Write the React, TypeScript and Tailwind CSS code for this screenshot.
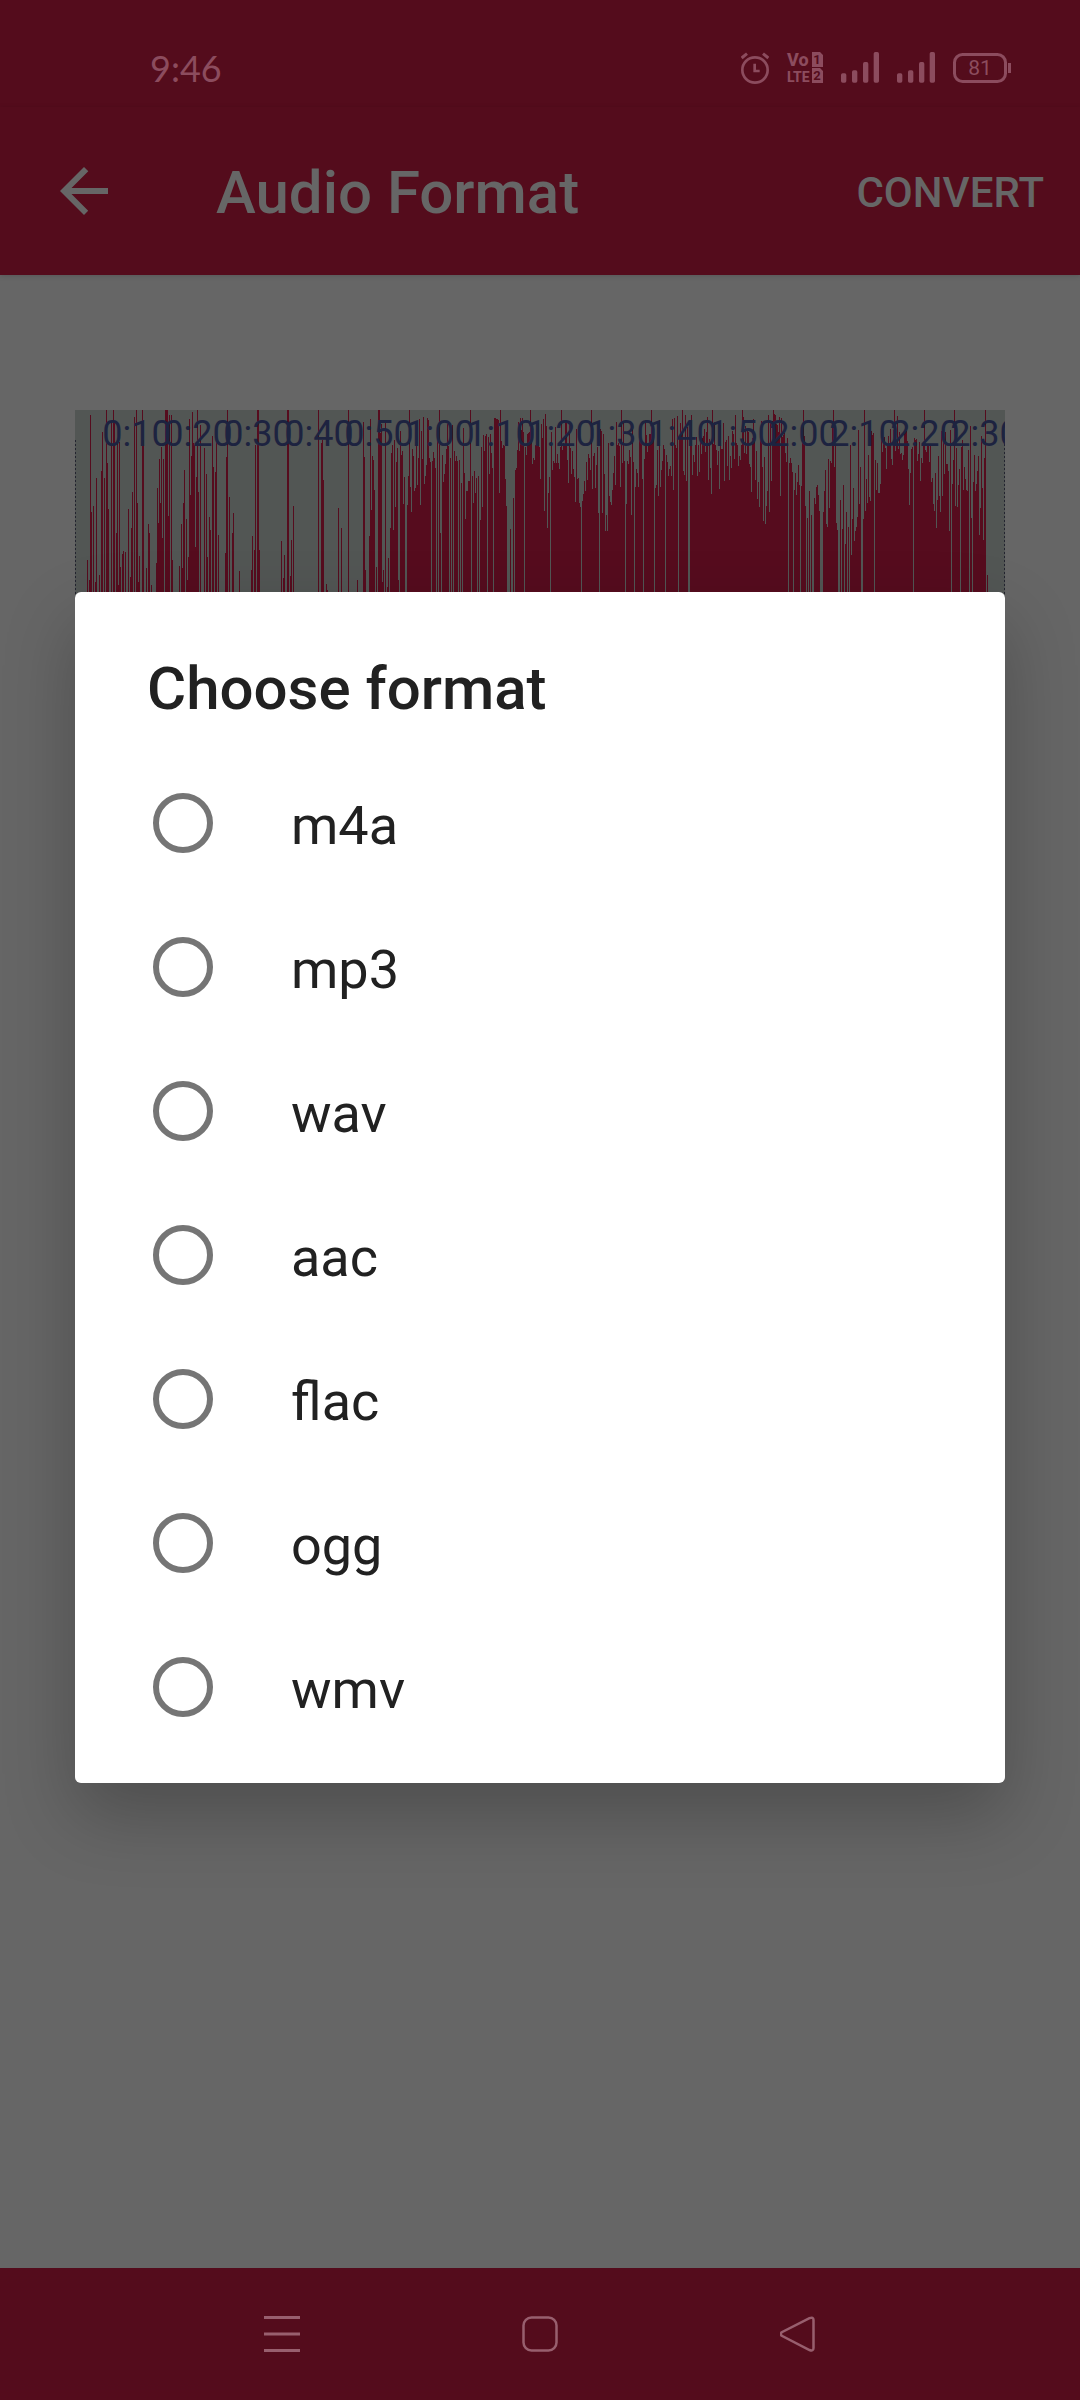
import { useState } from "react";

type Point = [number, number];

const FORMATS = ["m4a", "mp3", "wav", "aac", "flac", "ogg", "wmv"];

const WAVE_HEIGHT = 364;

// Quiet opening of the track: [column, top of the bar]
const INTRO: Point[] = [
  [12, 150], [14, 170], [15, 5], [16, 102], [18, 96], [20, 172], [21, 68], [24, 165], [26, 61], [27, 22],
  [29, 68], [31, 0], [32, 53], [33, 99], [36, 11], [38, 0], [39, 13], [41, 123], [42, 33], [43, 175],
  [44, 32], [45, 157], [47, 144], [48, 141], [50, 142], [53, 99], [55, 167], [56, 118], [57, 82], [59, 7],
  [61, 0], [62, 93], [63, 172], [64, 146], [67, 0], [68, 30], [71, 158], [73, 114], [74, 123], [76, 175],
  [81, 153], [82, 78], [83, 113], [84, 49], [85, 93], [86, 37], [87, 128], [88, 49], [90, 0], [91, 0],
  [92, 143], [93, 106], [94, 5], [96, 5], [97, 150], [104, 156], [106, 114], [107, 158], [108, 93], [109, 60],
  [111, 109], [112, 170], [113, 147], [114, 9], [115, 85], [116, 46], [117, 2], [118, 33], [119, 35], [120, 137],
  [121, 67], [122, 0], [123, 82], [125, 15], [129, 38], [131, 64], [132, 147], [134, 107], [135, 120], [137, 26],
  [138, 57], [140, 62], [141, 32], [143, 125], [150, 143], [151, 47], [152, 0], [154, 87], [157, 123], [158, 103],
  [164, 161], [176, 160], [177, 126], [179, 140], [180, 35], [182, 0], [183, 73], [184, 140], [206, 131], [208, 168],
  [209, 145], [212, 0], [215, 166], [216, 130], [218, 96], [243, 0], [246, 33], [247, 30], [248, 70], [251, 174],
  [252, 180], [263, 98], [266, 118], [273, 0], [282, 170], [288, 12], [289, 47], [290, 160], [294, 126], [295, 9],
  [296, 100], [297, 46], [298, 50], [299, 80], [301, 157], [303, 0], [304, 35], [305, 23], [306, 14], [307, 172],
  [308, 160], [310, 10], [312, 177], [313, 148], [315, 118], [316, 43], [317, 35], [318, 120], [319, 30], [320, 97],
  [321, 52], [322, 38], [323, 170],
];

// Loud part of the track: the bars' tops lie between these two outlines
const PEAKS: Point[] = [
  [324, 70], [326, 36], [335, 36], [351, 12], [355, 40], [371, 35], [388, 44], [402, 60], [408, 24], [420, 20],
  [430, 38], [432, 150], [440, 60], [444, 20], [460, 20], [465, 40], [470, 10], [472, 70], [477, 50], [485, 32],
  [492, 30], [502, 50], [505, 96], [510, 46], [522, 36], [528, 60], [536, 95], [540, 30], [552, 35], [562, 60],
  [564, 26], [582, 23], [592, 28], [605, 12], [625, 14], [637, 22], [642, 43], [650, 30], [657, 20], [665, 0],
  [675, 22], [688, 28], [695, 6], [713, 28], [718, 70], [722, 30], [727, 60], [735, 84], [742, 75], [747, 122],
  [750, 60], [758, 30], [761, 112], [768, 70], [773, 112], [778, 50], [785, 50], [790, 24], [805, 15], [825, 14],
  [845, 32], [858, 32], [868, 58], [878, 45], [884, 24], [892, 40], [902, 40], [907, 70], [909, 120],
];
const DIPS: Point[] = [
  [324, 150], [340, 130], [350, 140], [368, 150], [380, 110], [390, 130], [408, 130], [430, 120], [434, 170], [442, 70],
  [462, 80], [473, 160], [480, 80], [492, 80], [505, 150], [512, 90], [525, 155], [537, 165], [545, 130], [560, 140],
  [575, 120], [590, 100], [610, 110], [625, 75], [645, 125], [658, 80], [680, 120], [688, 150], [705, 108], [725, 110],
  [742, 150], [758, 130], [775, 170], [785, 140], [802, 110], [818, 80], [835, 120], [855, 140], [872, 150], [888, 120],
  [909, 160],
];

// Columns without any sound
const SILENT = new Set([
  324, 330, 331, 356, 361, 363, 366, 374, 376, 378, 383, 385, 387, 396, 402, 404, 412, 418, 432, 433, 434, 436, 437,
  439, 449, 475, 506, 524, 550, 559, 568, 579, 590, 603, 613, 614, 713, 718, 725, 731, 733, 735, 737, 738, 745, 746,
  747, 763, 764, 766, 769, 772, 774, 786, 787, 799, 838, 876, 885, 894, 897,
]);

const LABELS = [
  "0:10", "0:20", "0:30", "0:40", "0:50", "1:00", "1:10", "1:20", "1:30", "1:40", "1:50", "2:00", "2:10", "2:20", "2:30",
];

function interpolate(points: Point[], x: number) {
  const i = points.findIndex((p) => p[0] >= x);
  if (i <= 0) return points[i === 0 ? 0 : points.length - 1][1];
  const [x0, y0] = points[i - 1];
  const [x1, y1] = points[i];
  return y0 + ((y1 - y0) * (x - x0)) / (x1 - x0);
}

function wavePath() {
  const bars: Point[] = [...INTRO];
  let seed = 7;
  for (let x = 324; x < 910; x++) {
    seed = (seed * 16807) % 2147483647;
    if (SILENT.has(x)) continue;
    const r = seed / 2147483647;
    const hi = interpolate(PEAKS, x);
    const lo = Math.max(hi, interpolate(DIPS, x));
    const top = r > 0.88 ? hi * 0.4 : hi + (lo - hi) * r * r;
    bars.push([x, Math.round(top)]);
  }
  bars.push([912, 165]);
  for (let n = 0; n < 30; n++) bars.push([Math.round(31 + n * 30.3), 0]);
  return bars.map(([x, y]) => `M${x} ${y}h1V${WAVE_HEIGHT}h-1z`).join("");
}

const WAVE = wavePath();

function Waveform() {
  return (
    <svg className="block h-[364px] w-full bg-[#525654]" role="img" aria-label="Waveform">
      <path d={WAVE} fill="#560c1e" shapeRendering="crispEdges" />
      <path d="M0.5 30V364M929.5 30V364" stroke="#23242f" strokeWidth="1" strokeDasharray="2 2" />
      <g fill="#1d2340" fontFamily="Roboto, sans-serif" fontSize="36" textAnchor="middle">
        {LABELS.map((label, i) => (
          <text key={label} x={Math.round(62 + i * 60.6)} y="36">
            {label}
          </text>
        ))}
      </g>
    </svg>
  );
}

function AlarmIcon() {
  return (
    <svg className="h-[34px] w-7" viewBox="0 0 84 102" fill="none" stroke="currentColor" strokeWidth="8">
      <circle cx="42" cy="57" r="38" />
      <path d="M2 21L18 8M82 21L66 8" strokeWidth="9" />
      <path d="M41 38V60H56" />
    </svg>
  );
}

function VolteIcon() {
  return (
    <svg className="h-[31px] w-9 overflow-visible" viewBox="0 0 36 31" fill="currentColor">
      <g fontFamily="Roboto, sans-serif" fontWeight="800">
        <text x="0" y="14" fontSize="18">Vo</text>
        <text x="0" y="30" fontSize="14">LTE</text>
      </g>
      <path d="M25 0h8l3 3v12H25zM25 16h8l3 3v12H25z" />
      <g fill="#540c1c" fontFamily="Roboto, sans-serif" fontSize="13" fontWeight="700" textAnchor="middle">
        <text x="30" y="12">1</text>
        <text x="30" y="28">2</text>
      </g>
    </svg>
  );
}

function SignalIcon() {
  return (
    <svg className="h-[31px] w-[38px]" viewBox="0 0 114 93" fill="currentColor">
      <rect x="0" y="64" width="16" height="28" rx="5" />
      <rect x="33" y="55" width="16" height="37" rx="5" />
      <rect x="66" y="30" width="16" height="62" rx="5" />
      <rect x="98" y="0" width="16" height="92" rx="5" />
    </svg>
  );
}

function BatteryIcon() {
  return (
    <svg className="h-[30px] w-[58px]" viewBox="0 0 58 30" fill="none" stroke="currentColor">
      <rect x="1.5" y="1.5" width="51" height="27" rx="8" strokeWidth="3" />
      <path d="M56.5 10V20" strokeWidth="3" />
      <text x="27" y="22" fill="currentColor" stroke="none" fontFamily="Roboto, sans-serif" fontSize="21" textAnchor="middle">
        81
      </text>
    </svg>
  );
}

export default function App() {
  const [format, setFormat] = useState("");
  return (
    <div className="relative flex min-h-screen flex-col bg-[#666666] font-['Roboto',sans-serif]">
      <div className="flex h-[107px] items-center justify-between bg-[#540c1c] pt-7 pr-[69px] pl-[150px] text-[#8c4c5e]">
        <time className="font-['Lato',sans-serif] text-[36px] leading-none">9:46</time>
        <div className="flex items-center gap-[18px]">
          <AlarmIcon />
          <VolteIcon />
          <SignalIcon />
          <SignalIcon />
          <BatteryIcon />
        </div>
      </div>

      <header className="flex h-[168px] items-center bg-[#540c1c] pr-9 pl-[60px] text-[#666666] shadow-[0_1px_5px_rgba(0,0,0,0.15)]">
        <button type="button" aria-label="Back">
          <svg className="size-12" viewBox="0 0 48 48" fill="currentColor">
            <path d="M48 21H11.500L28.300 4.200L24 0L0 24L24 48L28.200 43.800L11.500 27H48z" />
          </svg>
        </button>
        <h1 className="mt-1 ml-[108px] flex-1 text-[60px] leading-none font-medium">Audio Format</h1>
        <button type="button" className="mt-1 text-[42px] leading-none font-medium">
          CONVERT
        </button>
      </header>

      <main className="flex-1 px-[75px] pt-[135px]">
        <Waveform />
      </main>

      <nav className="flex h-[132px] items-center justify-center gap-[222px] bg-[#540c1c] text-[#985f6e]">
        <button type="button" aria-label="Recent apps">
          <svg className="size-9" viewBox="0 0 36 36" stroke="currentColor" strokeWidth="3">
            <path d="M0 1.500H36M0 18H36M0 34.500H36" />
          </svg>
        </button>
        <button type="button" aria-label="Home">
          <svg className="size-9" viewBox="0 0 36 36" fill="none" stroke="currentColor" strokeWidth="2.500">
            <rect x="1.500" y="1.500" width="33" height="33" rx="8" />
          </svg>
        </button>
        <button type="button" aria-label="Back">
          <svg className="size-9" viewBox="0 0 36 36" fill="none" stroke="currentColor" strokeWidth="2.500">
            <path d="M1.800 16.200Q0 18 1.800 19.800L29.500 34Q33.500 35.500 33.500 32V4Q33.500 0.500 29.500 2.200Z" />
          </svg>
        </button>
      </nav>

      <div className="absolute inset-0 flex items-center justify-center px-[75px] pt-[107px] pb-[132px]">
        <div
          role="dialog"
          aria-labelledby="dialog-title"
          className="w-full rounded-md bg-white pt-[62px] pb-6 text-[#212121] shadow-[0_32px_72px_rgba(0,0,0,0.24)]"
        >
          <h2 id="dialog-title" className="px-[72px] text-[60px] leading-[70px] font-medium">
            Choose format
          </h2>
          <div role="radiogroup" aria-labelledby="dialog-title" className="mt-[27px]">
            {FORMATS.map((name) => (
              <label key={name} className="flex h-36 cursor-pointer items-center px-[78px]">
                <input
                  type="radio"
                  name="format"
                  value={name}
                  checked={format === name}
                  onChange={() => setFormat(name)}
                  className="size-[60px] appearance-none rounded-full border-6 border-[#757575] bg-white checked:border-[18px] checked:border-[#d22048]"
                />
                <span className="mt-1.5 ml-[78px] text-[54px] leading-none">{name}</span>
              </label>
            ))}
          </div>
        </div>
      </div>
    </div>
  );
}
